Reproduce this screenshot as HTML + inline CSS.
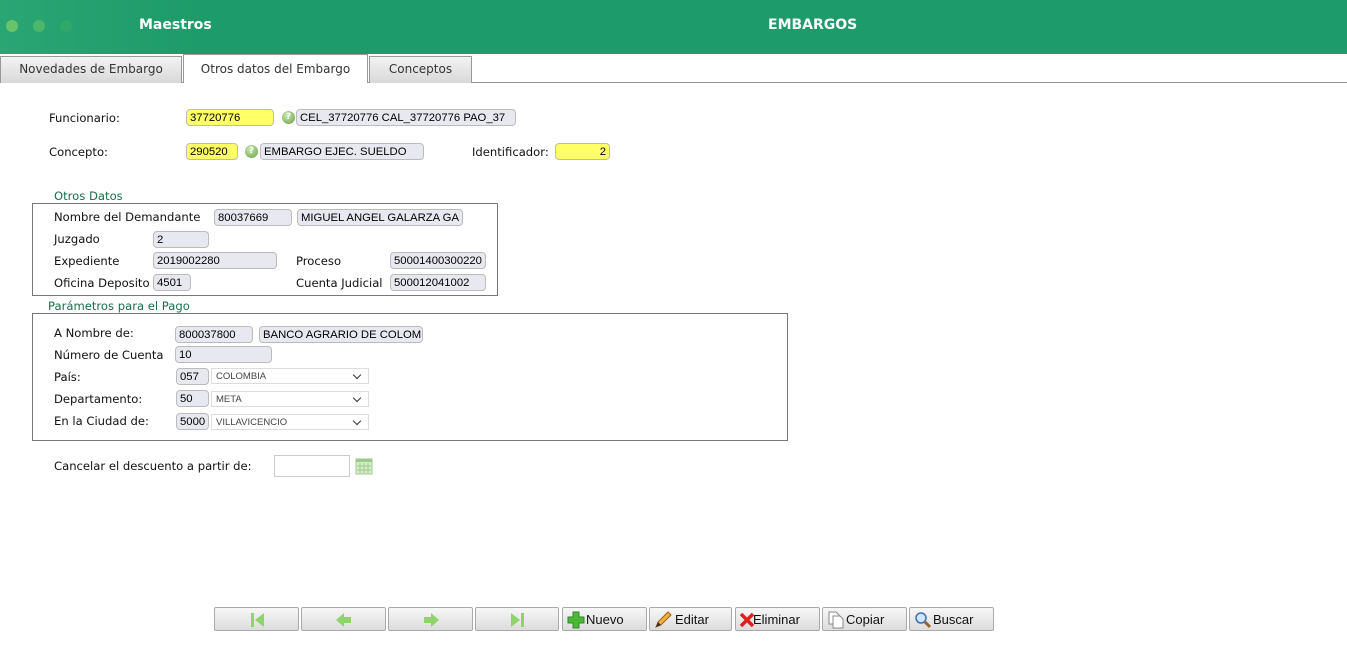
<!DOCTYPE html>
<html><head><meta charset="utf-8"><style>
*{box-sizing:border-box;margin:0;padding:0}
body{width:1347px;height:663px;background:#fff;position:relative;overflow:hidden;font-family:"DejaVu Sans",sans-serif;font-size:11.6px;color:#111}
.a{position:absolute;white-space:nowrap}
.hdr{left:0;top:0;width:1347px;height:54px;background:linear-gradient(90deg,#2aa574 0,#1e9b6a 200px,#1e9b6a)}
.dot{position:absolute;top:20px;width:12px;height:12px;border-radius:50%}
.ht{color:#fff;font-weight:bold;font-size:14px;font-family:"DejaVu Sans",sans-serif;top:17px}
.tab{top:56px;height:27px;border:1px solid #999;border-bottom:none;background:linear-gradient(#f3f3f3,#d9d9d9);font-size:12px;color:#333;text-align:center;line-height:24px}
.tab.on{background:#fff;top:54px;height:29px;line-height:28px}
.inp{height:17px;border:1px solid #bbb;border-radius:4px;background:#e8e8f0;font-family:"Liberation Sans",Arial,sans-serif;font-size:11.3px;line-height:16px;padding-left:3px;overflow:hidden;color:#000}
.y{background:#ffff66}
.sel{height:16px;border:1px solid #ddd;background:#fff;font-family:"Liberation Sans",sans-serif;font-size:9.5px;color:#444;line-height:15px;padding-left:4px}
.sel:after{content:"";position:absolute;right:8px;top:3px;width:5px;height:5px;border-right:1.5px solid #333;border-bottom:1.5px solid #333;transform:rotate(45deg)}
.q{width:13px;height:13px;border-radius:50%;background:radial-gradient(circle at 40% 35%,#cfe9b6,#5e9d3c);color:#fff;font-size:9px;font-weight:bold;text-align:center;line-height:13px}
.box{border:1px solid #777}
.leg{color:#1a6e4a;font-size:11.6px}
.btn{top:607px;height:24px;border:1px solid #aaa;border-radius:2px;background:linear-gradient(#f7f7f7,#dcdcdc);font-family:"Liberation Sans Narrow","Liberation Sans",sans-serif;font-size:13px;line-height:23px;color:#111}
.l{margin-top:1px}
</style></head><body>
<div class="a hdr"><div class="dot" style="left:6px;background:#67c46a"></div><div class="dot" style="left:33px;background:#4cb66a"></div><div class="dot" style="left:60px;background:#30a86a"></div></div>
<div class="a ht" style="left:139px">Maestros</div>
<div class="a ht" style="left:768px">EMBARGOS</div>
<div class="a" style="left:0;top:82px;width:1347px;height:1px;background:#999"></div>
<div class="a tab" style="left:0;width:182px">Novedades de Embargo</div>
<div class="a tab on" style="left:183px;width:185px">Otros datos del Embargo</div>
<div class="a tab" style="left:369px;width:103px">Conceptos</div>

<div class="a" style="left:49px;top:111px">Funcionario:</div>
<div class="a inp y" style="left:186px;top:109px;width:88px">37720776</div>
<div class="a q" style="left:282px;top:111px">?</div>
<div class="a inp" style="left:296px;top:109px;width:220px">CEL_37720776 CAL_37720776 PAO_37</div>
<div class="a" style="left:49px;top:145px">Concepto:</div>
<div class="a inp y" style="left:186px;top:143px;width:52px">290520</div>
<div class="a q" style="left:245px;top:145px">?</div>
<div class="a inp" style="left:260px;top:143px;width:164px">EMBARGO EJEC. SUELDO</div>
<div class="a" style="left:472px;top:145px">Identificador:</div>
<div class="a inp y" style="left:555px;top:143px;width:55px;text-align:right;padding-right:3px">2</div>

<div class="a leg" style="left:54px;top:189px">Otros Datos</div>
<div class="a box" style="left:32px;top:203px;width:466px;height:93px"></div>
<div class="a" style="left:54px;top:210px">Nombre del Demandante</div>
<div class="a inp" style="left:214px;top:209px;width:78px">80037669</div>
<div class="a inp" style="left:297px;top:209px;width:166px">MIGUEL ANGEL GALARZA GA</div>
<div class="a" style="left:54px;top:232px">Juzgado</div>
<div class="a inp" style="left:153px;top:231px;width:56px">2</div>
<div class="a" style="left:54px;top:254px">Expediente</div>
<div class="a inp" style="left:153px;top:252px;width:124px">2019002280</div>
<div class="a" style="left:296px;top:254px">Proceso</div>
<div class="a inp" style="left:390px;top:252px;width:96px">50001400300220</div>
<div class="a" style="left:54px;top:276px">Oficina Deposito</div>
<div class="a inp" style="left:153px;top:274px;width:38px">4501</div>
<div class="a" style="left:296px;top:276px">Cuenta Judicial</div>
<div class="a inp" style="left:390px;top:274px;width:96px">500012041002</div>

<div class="a leg" style="left:48px;top:299px">Parámetros para el Pago</div>
<div class="a box" style="left:32px;top:313px;width:756px;height:128px"></div>
<div class="a" style="left:54px;top:326px">A Nombre de:</div>
<div class="a inp" style="left:175px;top:326px;width:78px">800037800</div>
<div class="a inp" style="left:259px;top:326px;width:164px">BANCO AGRARIO DE COLOM</div>
<div class="a" style="left:54px;top:348px">Número de Cuenta</div>
<div class="a inp" style="left:175px;top:346px;width:97px">10</div>
<div class="a" style="left:54px;top:370px">País:</div>
<div class="a inp" style="left:176px;top:368px;width:33px">057</div>
<div class="a sel" style="left:211px;top:368px;width:158px">COLOMBIA</div>
<div class="a" style="left:54px;top:392px">Departamento:</div>
<div class="a inp" style="left:176px;top:390px;width:33px">50</div>
<div class="a sel" style="left:211px;top:391px;width:158px">META</div>
<div class="a" style="left:54px;top:414px">En la Ciudad de:</div>
<div class="a inp" style="left:176px;top:413px;width:33px">5000</div>
<div class="a sel" style="left:211px;top:414px;width:158px">VILLAVICENCIO</div>

<div class="a" style="left:54px;top:459px">Cancelar el descuento a partir de:</div>
<div class="a" style="left:274px;top:455px;width:76px;height:22px;border:1px solid #ccc"></div>
<svg class="a" style="left:355px;top:458px" width="18" height="17"><rect x="1" y="1" width="16" height="15" fill="#d8eccb" stroke="#9cc98a"/><rect x="1" y="1" width="16" height="3" fill="#9cc98a"/><path d="M5 5v10M9 5v10M13 5v10M2 8h14M2 12h14" stroke="#9cc98a"/></svg>

<div class="a btn" style="left:214px;width:85px"><svg style="position:absolute;left:34px;top:4px" width="18" height="16"><rect x="2" y="1" width="3" height="14" fill="#8fd46a"/><path d="M15 1v14L6 8z" fill="#8fd46a"/></svg></div>
<div class="a btn" style="left:301px;width:85px"><svg style="position:absolute;left:33px;top:4px" width="18" height="16"><path d="M1 8l8-7v4h7v6H9v4z" fill="#8fd46a"/></svg></div>
<div class="a btn" style="left:388px;width:85px"><svg style="position:absolute;left:33px;top:4px" width="18" height="16"><path d="M17 8l-8-7v4H2v6h7v4z" fill="#8fd46a"/></svg></div>
<div class="a btn" style="left:475px;width:84px"><svg style="position:absolute;left:33px;top:4px" width="18" height="16"><path d="M2 1v14l9-7z" fill="#8fd46a"/><rect x="12" y="1" width="3" height="14" fill="#8fd46a"/></svg></div>
<div class="a btn" style="left:562px;width:85px"><svg style="position:absolute;left:4px;top:3px" width="18" height="18"><path d="M6 1h6v5h5v6h-5v5H6v-5H1V6h5z" fill="#4cb83a" stroke="#2f8a25"/></svg><span style="position:absolute;left:23px">Nuevo</span></div>
<div class="a btn" style="left:649px;width:83px"><svg style="position:absolute;left:4px;top:3px" width="18" height="18"><path d="M2 16l2-5 10-10 3 3-10 10z" fill="#f0b040" stroke="#a06010"/><path d="M2 16l2-5 3 3z" fill="#333"/></svg><span style="position:absolute;left:25px">Editar</span></div>
<div class="a btn" style="left:735px;width:85px"><svg style="position:absolute;left:3px;top:4px" width="16" height="16"><path d="M2 2l12 12M14 2L2 14" stroke="#e02020" stroke-width="3.5"/></svg><span style="position:absolute;left:17px">Eliminar</span></div>
<div class="a btn" style="left:822px;width:85px"><svg style="position:absolute;left:5px;top:3px" width="16" height="18"><path d="M1 1h7l3 3v9H1z" fill="#fff" stroke="#888"/><path d="M5 5h7l3 3v9H5z" fill="#fff" stroke="#888"/></svg><span style="position:absolute;left:23px">Copiar</span></div>
<div class="a btn" style="left:909px;width:85px"><svg style="position:absolute;left:4px;top:3px" width="18" height="18"><circle cx="7" cy="7" r="5" fill="#cfe6ff" stroke="#4070b0" stroke-width="1.5"/><path d="M11 11l5 5" stroke="#a06020" stroke-width="3"/></svg><span style="position:absolute;left:23px">Buscar</span></div>
</body></html>
